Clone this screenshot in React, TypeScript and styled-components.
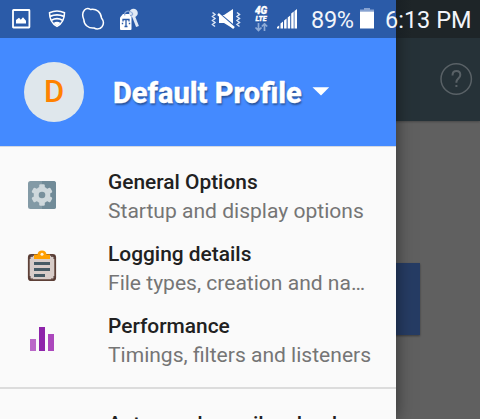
import React from 'react';
import styled, { createGlobalStyle } from 'styled-components';

const GlobalStyle = createGlobalStyle`
  * { box-sizing: border-box; }
  html, body { margin: 0; overflow: hidden; }
  body { font-family: Roboto, "Liberation Sans", sans-serif; }
  svg { display: block; flex: none; }
`;

const Screen = styled.div`
  position: relative;
  width: 480px;
  height: 419px;
  overflow: hidden;
  background: #606060;
`;

const Page = styled.main`
  display: flex;
  flex-direction: column;
  height: 100%;
`;

const AppBar = styled.header`
  display: flex;
  align-items: flex-end;
  justify-content: flex-end;
  height: 121px;
  padding: 0 7px 26px 0;
  background: #263238;
  box-shadow: 0 1px 2px rgba(0, 0, 0, 0.25);
`;

const PageButton = styled.div`
  width: 360px;
  height: 72px;
  margin: 142px 0 0 60px;
  background: #263c64;
  box-shadow: 0 1px 2px rgba(0, 0, 0, 0.4);
`;

const Drawer = styled.aside`
  position: absolute;
  inset: 0 auto 0 0;
  display: flex;
  flex-direction: column;
  width: 396px;
  background: #fafafa;
  box-shadow: 0 0 16px rgba(0, 0, 0, 0.5);
`;

const ProfileHeader = styled.div`
  display: flex;
  align-items: center;
  flex: none;
  height: 147px;
  padding: 38px 0 0 24px;
  background: #448aff;
  border-bottom: 1px solid #d3d8e2;
`;

const Avatar = styled.div`
  display: flex;
  align-items: center;
  justify-content: center;
  width: 60px;
  height: 60px;
  border-radius: 50%;
  background: #dfe7ec;
  color: #ff8200;
  font-size: 31px;
  font-weight: 500;
  line-height: 60px;
`;

const ProfileName = styled.h1`
  margin: 2px 10px 0 29px;
  width: 189px;
  color: #fff;
  font-size: 29px;
  font-weight: 800;
  line-height: 36px;
  -webkit-text-stroke: 0.3px #fff;
  white-space: nowrap;
  text-shadow: 1px 2px 2px rgba(0, 0, 0, 0.4);
`;

const Menu = styled.div`
  display: flex;
  flex-direction: column;
  flex: none;
  padding: 12px 0;
`;

const MenuItem = styled.div`
  display: flex;
  align-items: center;
  flex: none;
  height: 72px;
  padding: 0 22px 0 27px;
`;

const IconSlot = styled.div<{ $lift?: number }>`
  flex: none;
  width: 81px;
  padding-bottom: ${(p) => (p.$lift ?? 0) * 2}px;
`;

const Labels = styled.div`
  flex: 1;
  min-width: 0;
  height: 60px;
  padding-top: 2px;
`;

const Title = styled.div`
  height: 29px;
  color: #212121;
  font-size: 20.9px;
  font-weight: 500;
  line-height: 31px;
  white-space: nowrap;
`;

const Subtitle = styled.div`
  color: #757575;
  font-size: 21.05px;
  line-height: 29px;
  white-space: nowrap;
  overflow: hidden;
  text-overflow: ellipsis;
`;

const Divider = styled.hr`
  flex: none;
  width: 100%;
  height: 2px;
  margin: 0;
  border: 0;
  background: #dcdcdc;
`;

const StatusBar = styled.div`
  position: absolute;
  inset: 0 0 auto 0;
  display: flex;
  align-items: center;
  height: 38px;
  padding: 0 9px 0 11px;
  background: linear-gradient(90deg, #2b5ba8 396px, #192024 396px, #1e2528 412px);
  color: #fff;
`;

const Notifications = styled.div`
  display: flex;
  align-items: center;
  flex: 1;
`;

const Indicators = styled.div`
  display: flex;
  align-items: center;
`;

const Gap = styled.span<{ $w: number }>`
  flex: none;
  width: ${(p) => p.$w}px;
`;

const StatusText = styled.span<{ $w: number; $spacing?: number }>`
  width: ${(p) => p.$w}px;
  padding-top: 1px;
  color: #f2f5fa;
  font-size: 23.5px;
  line-height: 30px;
  letter-spacing: ${(p) => p.$spacing ?? 0}px;
  white-space: nowrap;
`;

const NetworkIcon = styled.div`
  display: flex;
  flex-direction: column;
  align-items: center;
  width: 14px;
  height: 26px;
  margin-top: -1px;
  font-weight: 900;
  font-style: italic;
`;

const NetworkText = styled.span<{ $size: number }>`
  font-size: ${(p) => p.$size}px;
  line-height: ${(p) => p.$size}px;
  -webkit-text-stroke: 0.3px #fff;
`;

const PictureIcon = () => (
  <svg width="20" height="20" viewBox="0 0 20 20">
    <rect x="2" y="1" width="16.4" height="17.5" rx="0.5" fill="none" stroke="#fff" strokeWidth="1.8" />
    <path d="M5 14.5V11l3-2.200 1.800 2L12 8.300l3 3.500v2.700z" fill="#fff" />
  </svg>
);

const ShieldIcon = () => (
  <svg width="18" height="20" viewBox="0 0 18 20">
    <path d="M1.500 3.700Q9 .3 16.500 3.700C16.500 10 14.300 14.500 9 17.300 3.700 14.500 1.500 10 1.500 3.700z" fill="none" stroke="#fff" strokeWidth="1.500" />
    <path d="M2 7.300q7-3 14 0M3.500 11.300q5.500-3.200 11 0" fill="none" stroke="#fff" strokeWidth="1.800" />
    <path d="M5.500 14q3.500-2.300 7 0L9 16.700z" fill="#fff" />
  </svg>
);

const BlobIcon = () => (
  <svg width="24" height="24" viewBox="0 0 24 24">
    <path d="M3.500 3C5.500 1 8 1.500 9.500 2.500c6-1 10.500 2.500 11 8.500 2 2.500 2.500 6 .5 8.700-2 2.500-5.500 2.800-8 1.300C7.500 21.500 3 18 2.800 12.500 1.500 9.500 1.200 5.500 3.500 3z" fill="none" stroke="#fff" strokeWidth="1.500" />
  </svg>
);

const KeyTagIcon = () => (
  <svg width="22" height="24" viewBox="0 0 22 24">
    <path d="M14 8 18.500 19.500" stroke="#dfe8f5" strokeWidth="3" />
    <circle cx="14.500" cy="6" r="4.300" fill="#e2eaf5" />
    <path d="M1 10.500 4 7h6.500l2 3.500v11.500q0 1-1 1H2q-1 0-1-1z" fill="#fff" />
    <path d="M6 8.500C4.500 5.500 8 3.500 11 4.500s4 4 0 4" fill="none" stroke="#8fabd8" strokeWidth="1.200" />
    <path d="M4 14.500V12.500h6v2M7 12.500v7M5.500 19.500h3M2.800 16.500h1.400M9.800 16.500h1.400" fill="none" stroke="#2b5ba8" strokeWidth="1.300" />
  </svg>
);

const VibrateMuteIcon = () => (
  <svg width="30" height="24" viewBox="0 0 30 24">
    <path d="M1.500 5.500 4 7.500 1.500 9.500 4 11.500 1.500 13.500 4 15.500 1.500 17.500 4 19.500M26 5.500l2.500 2L26 9.500l2.500 2-2.500 2 2.500 2-2.500 2 2.500 2" fill="none" stroke="#d9e4f4" strokeWidth="1.500" />
    <path d="M8 8h5l9-6v19.500l-9-5.500H8z" fill="#fff" />
    <path d="M7 5.500 23 19" stroke="#2b5ba8" strokeWidth="1.800" />
    <path d="M7 7 23 21" stroke="#fff" strokeWidth="2.500" />
  </svg>
);

const DataArrows = () => (
  <svg width="14" height="9" viewBox="0 0 14 9">
    <path d="M4.500 0v6M1.500 4.500l3 3 3-3M10.500 8V1.500M7.800 3.500l2.700-2.700 2.700 2.700" fill="none" stroke="#8caad6" strokeWidth="1.700" />
  </svg>
);

const SignalIcon = () => (
  <svg width="20" height="20" viewBox="0 0 20 20" fill="#fff">
    <path d="M0 19.500V18l2.200-1.500v3zM3.500 19.500v-5l2.500-2v7zM7.100 19.500v-8l2.500-2v10zM10.700 19.500v-11l2.500-2v13zM14.200 19.500v-15l2.500-2v17zM17.500 19.500V2L20 0v19.500z" />
  </svg>
);

const BatteryIcon = () => (
  <svg width="14" height="23" viewBox="0 0 14 23">
    <path d="M0 3.500V1.500h4V0h6v1.500h4v2z" fill="#86a2d1" />
    <path d="M0 3.500h14v17H0z" fill="#fff" />
  </svg>
);

const HelpIcon = () => (
  <svg width="33" height="33" viewBox="0 0 33 33" fill="none" stroke="#596166">
    <circle cx="16.200" cy="17" r="15.200" strokeWidth="1.500" />
    <path d="M12.500 13.500c0-3 1.500-4.400 4-4.400s3.800 1.500 3.800 3.800c0 3.400-3.900 3.800-3.900 7.100v.7M16.400 22.900v2.100" strokeWidth="2" />
  </svg>
);

const Caret = () => (
  <svg width="18" height="11" viewBox="0 0 18 11">
    <path d="M.5.300h16.700L9 8.500z" fill="#fff" />
  </svg>
);

const GearIcon = () => (
  <svg width="30" height="30" viewBox="0 0 30 30">
    <rect x="1" y="1" width="28" height="28" rx="2.500" fill="#839aa6" />
    <path d="M15 1h11.500Q29 1 29 3.500v23q0 2.500-2.500 2.500H15z" fill="#718b98" />
    <g fill="#cfd8dc">
      <circle cx="15" cy="15" r="8.300" />
      {[0, 60, 120].map((angle) => (
        <rect key={angle} x="12.200" y="4.300" width="5.600" height="21.400" rx="1.300" transform={`rotate(${angle} 15 15)`} />
      ))}
    </g>
    <circle cx="15" cy="15" r="3.300" fill="#78909c" />
  </svg>
);

const ClipboardIcon = () => (
  <svg width="30" height="32" viewBox="0 0 30 32">
    <rect x="1.800" y="4.800" width="26.400" height="25.400" rx="2.500" fill="#d7ccc8" stroke="#5d4037" strokeWidth="1.800" />
    <path d="M2.900 9V6.100h3M24 6.100h3.100V9M2.900 26v3h3M24 29h3.100v-3" fill="none" stroke="#4e342e" strokeWidth="1.200" />
    <path d="M7 9V4.500h3.500Q11 .6 15 .6t4.500 3.900H23V9z" fill="#ffa000" />
    <circle cx="15" cy="4.300" r="1.500" fill="#fff3e0" />
    <path d="M7 13.400h16M7 19.400h16M7 25.400h11" stroke="#455a64" strokeWidth="3" />
  </svg>
);

const ChartIcon = () => (
  <svg width="30" height="30" viewBox="0 0 30 30">
    <path d="M3 17h6v12H3z" fill="#ba68c8" />
    <path d="M12 5h6v24h-6z" fill="#8e24aa" />
    <path d="M21 12h6v17h-6z" fill="#ab47bc" />
  </svg>
);

export default function App() {
  return (
    <Screen>
      <GlobalStyle />
      <Page>
        <AppBar><HelpIcon /></AppBar>
        <PageButton />
      </Page>
      <Drawer>
        <ProfileHeader>
          <Avatar>D</Avatar>
          <ProfileName>Default Profile</ProfileName>
          <Caret />
        </ProfileHeader>
        <Menu>
          <MenuItem>
            <IconSlot><GearIcon /></IconSlot>
            <Labels>
              <Title>General Options</Title>
              <Subtitle>Startup and display options</Subtitle>
            </Labels>
          </MenuItem>
          <MenuItem>
            <IconSlot $lift={1}><ClipboardIcon /></IconSlot>
            <Labels>
              <Title>Logging details</Title>
              <Subtitle>File types, creation and naming</Subtitle>
            </Labels>
          </MenuItem>
          <MenuItem>
            <IconSlot $lift={2}><ChartIcon /></IconSlot>
            <Labels>
              <Title>Performance</Title>
              <Subtitle>Timings, filters and listeners</Subtitle>
            </Labels>
          </MenuItem>
        </Menu>
        <Divider />
        <Menu>
          <MenuItem>
            <IconSlot />
            <Labels>
              <Title>Auto send, email, upload</Title>
            </Labels>
          </MenuItem>
        </Menu>
      </Drawer>
      <StatusBar>
        <Notifications>
          <PictureIcon />
          <Gap $w={17} />
          <ShieldIcon />
          <Gap $w={15} />
          <BlobIcon />
          <Gap $w={14} />
          <KeyTagIcon />
        </Notifications>
        <Indicators>
          <VibrateMuteIcon />
          <Gap $w={13} />
          <NetworkIcon>
            <NetworkText $size={10}>4G</NetworkText>
            <NetworkText $size={7}>LTE</NetworkText>
            <DataArrows />
          </NetworkIcon>
          <Gap $w={9} />
          <SignalIcon />
          <Gap $w={14} />
          <StatusText $w={49} $spacing={-0.3}>89%</StatusText>
          <BatteryIcon />
          <Gap $w={11} />
          <StatusText $w={86}>6:13 PM</StatusText>
        </Indicators>
      </StatusBar>
    </Screen>
  );
}
